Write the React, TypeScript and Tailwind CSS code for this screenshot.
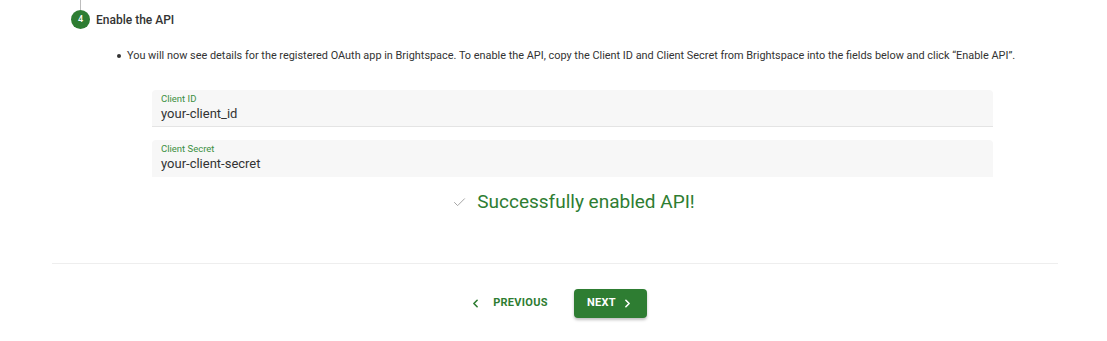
import React from 'react';
import { Check, ChevronLeft, ChevronRight } from 'lucide-react';

function Field({ label, value, underline }: { label: string; value: string; underline?: boolean }) {
  return (
    <div
      className={`h-[37px] rounded-t-[4px] bg-[#f7f7f7] px-[9px] pt-[2px] ${
        underline ? 'border-b border-[#e4e4e4]' : ''
      }`}
    >
      <div className="text-[9.5px] leading-[13px] text-[#3b8f3f]">{label}</div>
      <div className="text-[13px] leading-[17px] text-[#333333]">{value}</div>
    </div>
  );
}

export default function App() {
  return (
    <div className="h-[341px] w-full bg-white font-['Roboto','Liberation_Sans',sans-serif] text-[#333333]">
      <div className="ml-[52px] w-[1006px]">
        {/* step 4 */}
        <div className="pl-[19px]">
          <div className="ml-[9px] h-[10px] w-px bg-[#bdbdbd]" />
          <div className="flex h-[19px] items-center gap-[6px]">
            <div className="flex h-[19px] w-[19px] items-center justify-center rounded-full bg-[#2e7d32] text-[9px] font-medium text-white">
              4
            </div>
            <span className="text-[12px] font-medium text-[#333333]">Enable the API</span>
          </div>
        </div>

        <ul className="mt-[19px] pl-[65px]">
          <li className="flex items-start gap-[6px] text-[10.9px] leading-[16px] text-[#333333]">
            <span className="mt-[6px] h-[4px] w-[4px] shrink-0 rounded-full bg-[#333333]" />
            <span>
              You will now see details for the registered OAuth app in Brightspace. To enable the API, copy the Client
              ID and Client Secret from Brightspace into the fields below and click “Enable API”.
            </span>
          </li>
        </ul>

        <div className="mt-[26px] ml-[100px] w-[841px]">
          <div className="flex flex-col gap-[13px]">
            <Field label="Client ID" value="your-client_id" underline />
            <Field label="Client Secret" value="your-client-secret" />
          </div>
          <div className="mt-[13px] flex h-[24px] items-center justify-center gap-[10px] pl-[2px]">
            <Check className="h-[15px] w-[15px] text-[#9e9e9e]" strokeWidth={1.5} />
            <span className="text-[19px] leading-[24px] text-[#2e7d32]">Successfully enabled API!</span>
          </div>
        </div>

        <div className="mt-[49px] h-px bg-[#eeeeee]" />

        <div className="mt-[25px] flex items-center justify-center gap-[18px] pr-[2px]">
          <button className="flex h-[29px] items-center gap-[11px] px-[8px] text-[11px] font-bold tracking-[0.3px] text-[#2e7d32]">
            <ChevronLeft className="h-[13px] w-[13px]" strokeWidth={3} />
            PREVIOUS
          </button>
          <button className="flex h-[29px] w-[73px] items-center justify-center gap-[5px] rounded-[4px] bg-[#2e7d32] text-[11px] font-bold tracking-[0.3px] text-white shadow-[0_2px_3px_rgba(0,0,0,0.25)]">
            NEXT
            <ChevronRight className="h-[13px] w-[13px]" strokeWidth={3} />
          </button>
        </div>
      </div>
    </div>
  );
}
